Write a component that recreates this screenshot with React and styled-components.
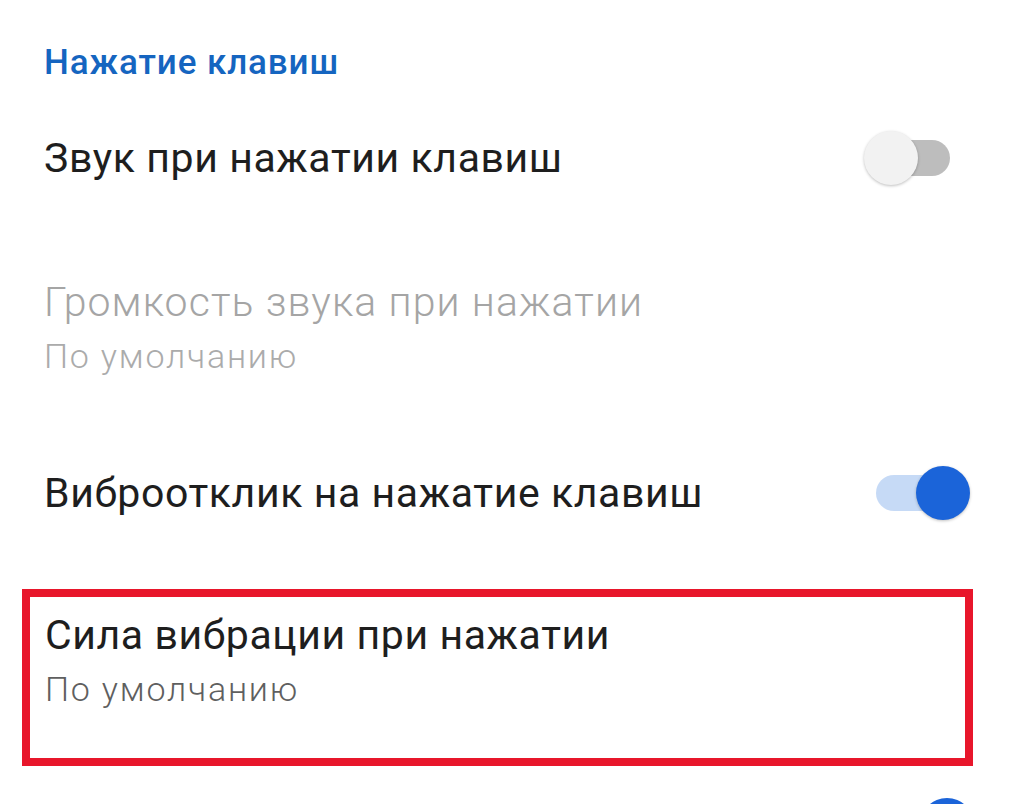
import React, { useState } from 'react';
import styled, { createGlobalStyle } from 'styled-components';

const GlobalStyle = createGlobalStyle`
  html, body {
    margin: 0;
    padding: 0;
    background: #fff;
  }
  body {
    font-family: Roboto, "Noto Sans", sans-serif;
    overflow: hidden;
  }
`;

const Screen = styled.div`
  width: 1024px;
  height: 804px;
  overflow: hidden;
  background: #fff;
  display: flex;
  flex-direction: column;
`;

const SectionTitle = styled.div`
  flex: none;
  padding: 42px 0 0 44px;
  height: 90px;
  box-sizing: border-box;
  font-size: 35px;
  line-height: 42px;
  letter-spacing: 0.9px;
  font-weight: 500;
  color: #1565c0;
`;

const Row = styled.div`
  flex: none;
  display: flex;
  align-items: center;
  justify-content: space-between;
  box-sizing: border-box;
  height: ${({ $h }) => $h}px;
  padding: 0 44px;
`;

const HighlightRow = styled(Row)`
  margin: 31px 51px 0 22px;
  padding: 0 0 36px 15px;
  border: 8px solid #e8162b;
`;

const Texts = styled.div`
  display: flex;
  flex-direction: column;
  gap: 10px;
`;

const Title = styled.div`
  font-size: 41px;
  line-height: 48px;
  letter-spacing: ${({ $disabled }) => ($disabled ? '1.1px' : '0.6px')};
  font-weight: ${({ $disabled }) => ($disabled ? 300 : 400)};
  color: ${({ $disabled }) => ($disabled ? '#a5a5a5' : '#1e1e1e')};
`;

const Summary = styled.div`
  font-size: 34px;
  line-height: 40px;
  letter-spacing: 1.8px;
  font-weight: 300;
  color: ${({ $disabled }) => ($disabled ? '#ababab' : '#5f5f5f')};
`;

const Track = styled.button`
  position: relative;
  width: 80px;
  height: 36px;
  border: none;
  padding: 0;
  border-radius: 18px;
  background: ${({ $on }) => ($on ? '#c6daf6' : '#bdbdbd')};
  margin-right: ${({ $on }) => ($on ? '24px' : '30px')};
  cursor: pointer;
`;

const Thumb = styled.span`
  position: absolute;
  top: 50%;
  width: 54px;
  height: 54px;
  border-radius: 50%;
  transform: translateY(-50%);
  left: ${({ $on }) => ($on ? '40px' : '-6px')};
  background: ${({ $on }) => ($on ? '#1b64d9' : '#f2f2f2')};
  box-shadow: 0 1px 3px rgba(0, 0, 0, 0.25);
`;

const Peek = styled.div`
  flex: none;
  display: flex;
  justify-content: flex-end;
  padding: 32px 50px 0 0;
`;

const PeekThumb = styled.span`
  width: 54px;
  height: 54px;
  border-radius: 50%;
  background: #1b64d9;
`;

const Switch = ({ on, onToggle }) => (
  <Track $on={on} onClick={onToggle}>
    <Thumb $on={on} />
  </Track>
);

export default function App() {
  const [sound, setSound] = useState(false);
  const [vibro, setVibro] = useState(true);

  return (
    <Screen>
      <GlobalStyle />
      <SectionTitle>Нажатие клавиш</SectionTitle>
      <Row $h={136}>
        <Title>Звук при нажатии клавиш</Title>
        <Switch on={sound} onToggle={() => setSound(!sound)} />
      </Row>
      <Row $h={202}>
        <Texts>
          <Title $disabled>Громкость звука при нажатии</Title>
          <Summary $disabled>По умолчанию</Summary>
        </Texts>
      </Row>
      <Row $h={130}>
        <Title>Виброотклик на нажатие клавиш</Title>
        <Switch on={vibro} onToggle={() => setVibro(!vibro)} />
      </Row>
      <HighlightRow $h={177}>
        <Texts>
          <Title>Сила вибрации при нажатии</Title>
          <Summary>По умолчанию</Summary>
        </Texts>
      </HighlightRow>
      <Peek>
        <PeekThumb />
      </Peek>
    </Screen>
  );
}
